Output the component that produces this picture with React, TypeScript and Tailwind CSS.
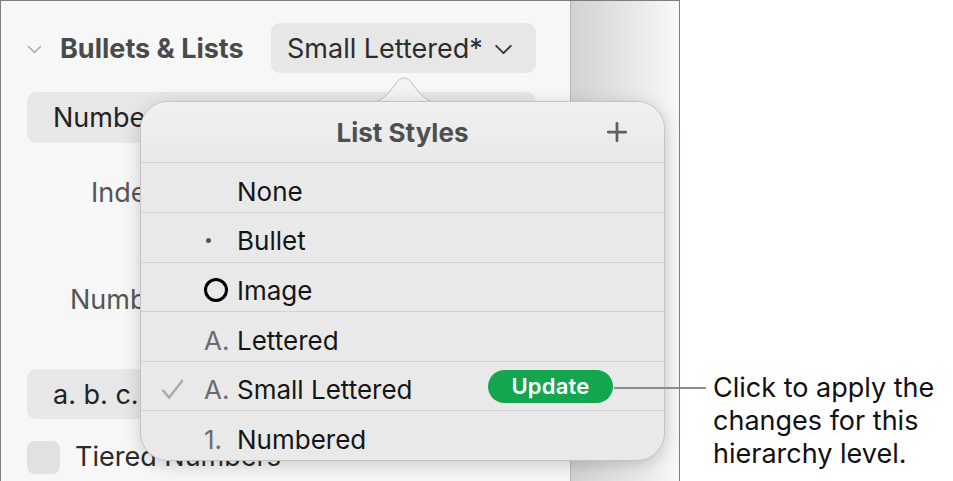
import { Plus } from "lucide-react";

const font = { fontFamily: "Inter, 'Noto Sans', sans-serif" };

type Row = { label: string; marker?: "dot" | "ring" | string; checked?: boolean; update?: boolean };

const rows: Row[] = [
  { label: "None" },
  { label: "Bullet", marker: "dot" },
  { label: "Image", marker: "ring" },
  { label: "Lettered", marker: "A." },
  { label: "Small Lettered", marker: "A.", checked: true, update: true },
  { label: "Numbered", marker: "1." },
];

function Chevron({ className }: { className?: string }) {
  return (
    <svg viewBox="0 0 20 12" className={className} fill="none" stroke="currentColor" strokeWidth="2" strokeLinecap="round" strokeLinejoin="round">
      <path d="M2 2l8 8 8-8" />
    </svg>
  );
}

function Marker({ m }: { m?: Row["marker"] }) {
  if (!m) return null;
  if (m === "dot") return <span className="ml-[2px] block h-[5px] w-[5px] rounded-full bg-[#555]" />;
  if (m === "ring") return <span className="block h-[24px] w-[24px] rounded-full border-[3px] border-black" />;
  return <span className="text-[#6b6b6b]">{m}</span>;
}

function ListRow({ row }: { row: Row }) {
  return (
    <div className="flex h-[50px] items-center border-t border-[#d3d3d3] pl-[20px] pt-[7px]">
      <span className="flex w-[43px] items-center">
        {row.checked && (
          <svg viewBox="0 0 24 22" className="h-[21px] w-[23px]" fill="none" stroke="#ababab" strokeWidth="2.6" strokeLinecap="round" strokeLinejoin="round">
            <path d="M2 12l6.5 7.5L22 2" />
          </svg>
        )}
      </span>
      <span className="flex w-[33px] items-center">
        <Marker m={row.marker} />
      </span>
      <span className="text-[#151515]">{row.label}</span>
      {row.update && (
        <span className="ml-auto mr-[51px] -mt-[7px] flex h-[33px] w-[125px] items-center justify-center rounded-full bg-[#13a64e] text-[22px] font-semibold tracking-[0.01em] text-white">
          Update
        </span>
      )}
    </div>
  );
}

export default function App() {
  return (
    <div className="relative flex h-[481px] w-[953px] overflow-hidden bg-white text-[27px]" style={font}>
      {/* screenshot frame */}
      <div className="flex h-full w-[680px] border-l border-r border-t border-[#7d7d7d]">
        <div className="flex w-[570px] flex-col border-r border-[#b4b4b4] bg-[#f7f7f7] pl-[26px] pr-[34px] pt-[22px]">
          <div className="flex h-[50px] items-center pt-[3px]">
            <Chevron className="h-[9px] w-[15px] text-[#a8a8a8]" />
            <span className="ml-[18px] font-bold text-[#4a4a4a]">Bullets &amp; Lists</span>
            <span className="-mt-[3px] ml-auto flex h-[50px] w-[265px] items-center rounded-[9px] bg-[#e7e7e7] pl-[16px] pt-[3px] text-[#2c2c2c]">
              Small Lettered*
              <Chevron className="ml-[11px] h-[11px] w-[19px] text-[#333]" />
            </span>
          </div>
          <div className="mt-[19px] flex h-[51px] items-center rounded-[9px] bg-[#e7e7e7] pl-[26px] pt-[2px] text-[#222]">Number</div>
          <div className="mt-[30px] pl-[64px] text-[#555]">Indent:</div>
          <div className="mt-[66px] pl-[43px] text-[#555]">Number:</div>
          <div className="mt-[49px] flex h-[50px] w-[200px] items-center rounded-[9px] bg-[#e7e7e7] pl-[26px] pt-[2px] text-[#222]">a. b. c.</div>
          <div className="mt-[18px] flex items-center">
            <span className="h-[33px] w-[33px] rounded-[8px] bg-[#e1e1e1]" />
            <span className="ml-[15px] text-[#2a2a2a]">Tiered Numbers</span>
          </div>
        </div>
        <div className="flex-1 bg-gradient-to-r from-[#d2d2d2] to-[#f8f8f8]" />
      </div>

      {/* caption */}
      <div className="pl-[33px] pt-[371px] leading-[33px] text-[#111]">
        Click to apply the
        <br />
        changes for this
        <br />
        hierarchy level.
      </div>

      {/* popover arrow */}
      <svg className="absolute left-[370px] top-[76px] h-[27px] w-[68px]" viewBox="0 0 68 27">
        <path d="M0 26 C10 26 14 22 20 15 L28 5 C31 1 37 1 40 5 L48 15 C54 22 58 26 68 26" fill="#f3f3f3" stroke="#bdbdbd" strokeWidth="1" />
      </svg>

      {/* popover */}
      <div className="absolute left-[140px] top-[101px] flex h-[360px] w-[525px] flex-col overflow-hidden rounded-[28px] border border-[#c4c4c4] bg-[#e9e9e9] text-[26px] shadow-[0_4px_18px_rgba(0,0,0,0.18)]">
        <div className="relative flex h-[61px] items-center justify-center bg-gradient-to-b from-[#f0f0f0] to-[#e9e9e9]">
          <span className="font-bold text-[#4f4f4f]">List Styles</span>
          <Plus className="absolute right-[32px] h-[30px] w-[30px] text-[#5f5f5f]" strokeWidth={2.2} />
        </div>
        {rows.map((r) => (
          <ListRow key={r.label} row={r} />
        ))}
      </div>

      {/* callout line */}
      <div className="absolute left-[614px] top-[387px] h-[2px] w-[92px] bg-[#8c8c8c]" />
    </div>
  );
}
